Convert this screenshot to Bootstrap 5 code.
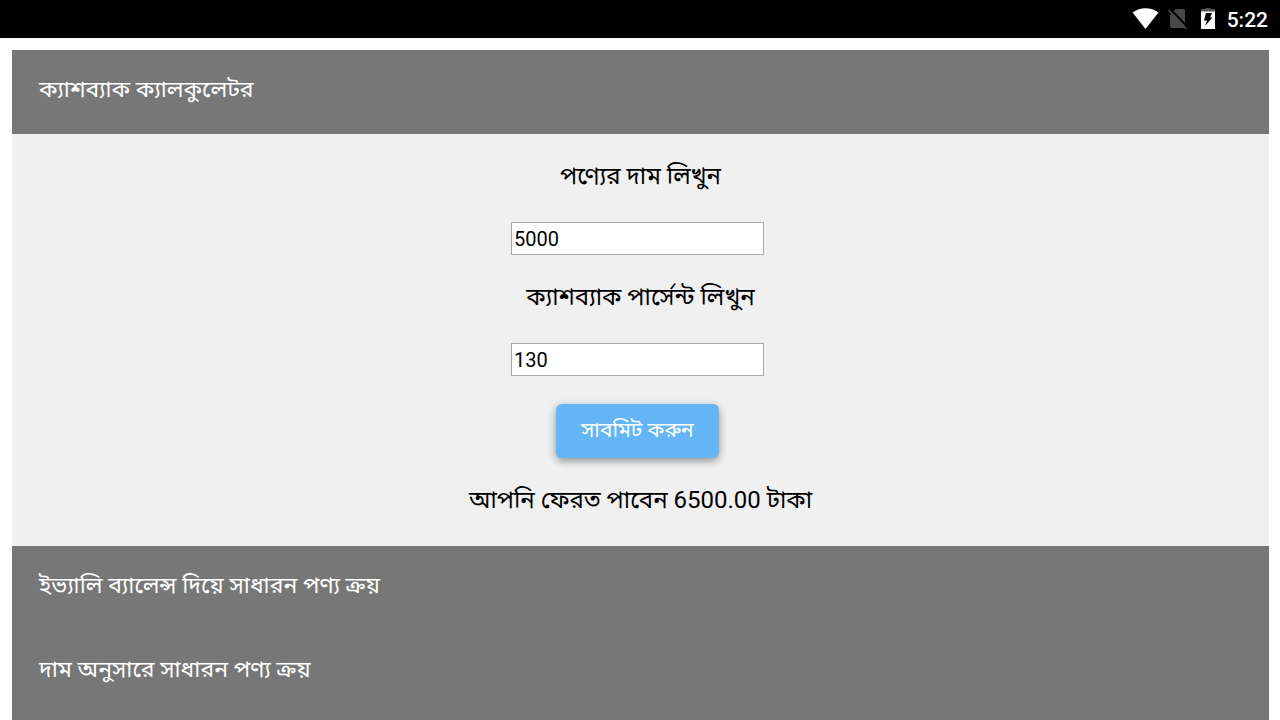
<!DOCTYPE html>
<html lang="bn">
<head>
<meta charset="utf-8">
<meta name="viewport" content="width=device-width, initial-scale=1">
<title>ক্যাশব্যাক ক্যালকুলেটর</title>
<link href="https://cdn.jsdelivr.net/npm/bootstrap@5.3.0/dist/css/bootstrap.min.css" rel="stylesheet">
<style>
body{font-family:Roboto,"Noto Sans Bengali","Noto Sans",sans-serif;font-size:24px;line-height:28px;color:#000;background:#fff}
.status-bar{height:38px;padding-right:12px;background:#000;font-size:21px;font-weight:500}
.status-icons{gap:9px;margin-right:12px}
.status-time{padding-top:2px}
.shell{margin:12px 11px 0 12px;background:#777}
.section-toggle{height:84px;padding:0 27px 4px;background:#777;color:#fff;border:0;font-size:23px}
.panel{background:#f0f0f0;padding:28px 0 32px}
.field-label{margin-bottom:32px}
.field-input{width:253px;height:33px;padding:0 2px;border:1px solid #a9a9a9;border-radius:0;font-size:20px;color:#000;background:#fff;margin:0 6px 28px 0}
.submit-btn{height:54px;padding:0 25px 2px;margin:0 6px 28px 0;background:#64b5f6;color:#fff;border:0;border-radius:6px;font-size:21px;box-shadow:0 3px 8px rgba(0,0,0,.4)}
</style>
</head>
<body class="d-flex flex-column min-vh-100">
<header class="status-bar d-flex align-items-center justify-content-end text-white">
<div class="status-icons d-flex align-items-center">
<svg width="27" height="22" viewBox="0 0 27 22" aria-hidden="true"><path d="M.5 4.500C8-1.200 19-1.200 26.500 4.500L13.500 21Z" fill="#fff"/></svg>
<svg width="20" height="22" viewBox="0 0 20 22" aria-hidden="true"><path d="M7.500 1H15.500Q17 1 17 2.500V19Q17 20 16 20H4Q2 20 2 18V7Z" fill="#484848"/><path d="M1.500 0L20 19.500" stroke="#000" stroke-width="2"/><path d="M.5 2L18.500 21" stroke="#484848" stroke-width="1.600"/></svg>
<svg class="ms-1" width="14" height="22" viewBox="0 0 14 22" aria-hidden="true"><path d="M4.500 0H9.500V1H14V4H0V1H4.500Z" fill="#555"/><path d="M0 3.500H14V21H0Z" fill="#fff"/><path d="M5 5H11L9 9.500H11.500L4 18L6 12.500H3Z" fill="#000"/></svg>
</div>
<span class="status-time">5:22</span>
</header>
<main class="shell flex-grow-1">
<button type="button" class="section-toggle d-block w-100 text-start">ক্যাশব্যাক ক্যালকুলেটর</button>
<form class="panel d-flex flex-column align-items-center">
<label class="field-label" for="price">পণ্যের দাম লিখুন</label>
<input class="field-input" id="price" type="text" value="5000">
<label class="field-label" for="percent">ক্যাশব্যাক পার্সেন্ট লিখুন</label>
<input class="field-input" id="percent" type="text" value="130">
<button type="button" class="submit-btn">সাবমিট করুন</button>
<output for="price percent">আপনি ফেরত পাবেন 6500.00 টাকা</output>
</form>
<button type="button" class="section-toggle d-block w-100 text-start">ইভ্যালি ব্যালেন্স দিয়ে সাধারন পণ্য ক্রয়</button>
<button type="button" class="section-toggle d-block w-100 text-start">দাম অনুসারে সাধারন পণ্য ক্রয়</button>
</main>
<script src="https://cdn.jsdelivr.net/npm/bootstrap@5.3.0/dist/js/bootstrap.bundle.min.js"></script>
</body>
</html>
